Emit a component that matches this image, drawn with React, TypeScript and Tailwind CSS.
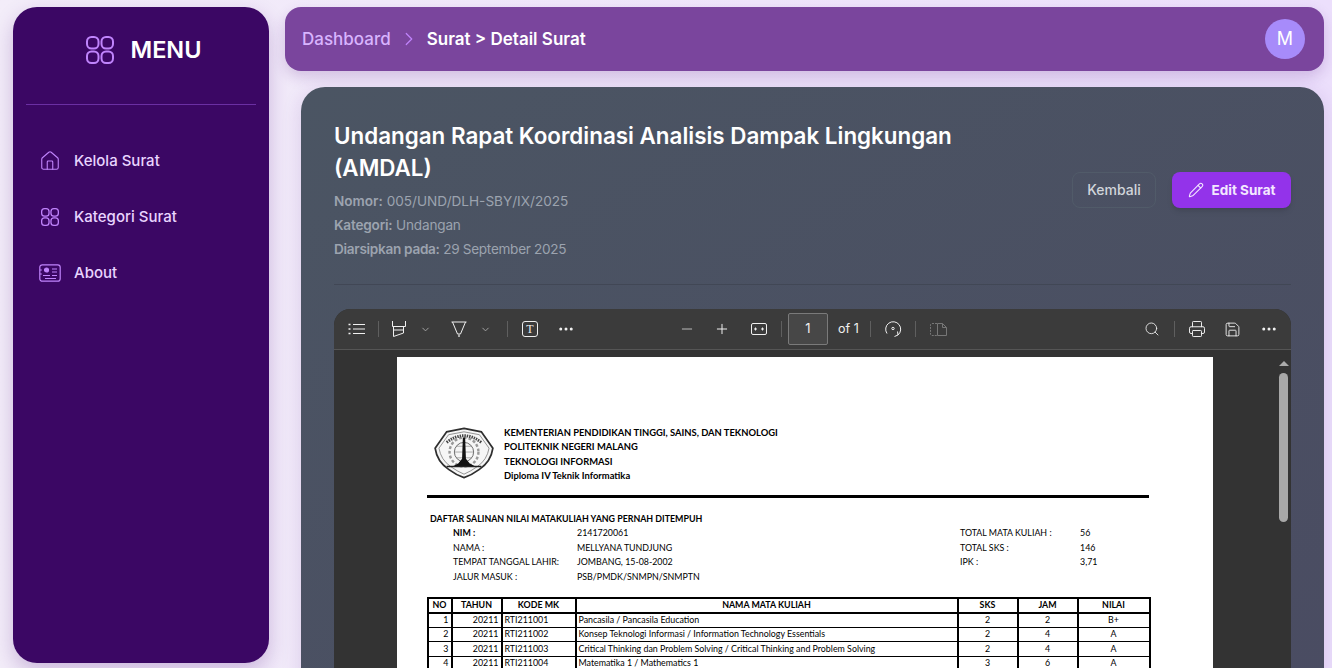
import React from 'react';
import { ChevronDown, ChevronRight, Ellipsis, Home, Minus, Pencil, Plus, Printer, Save, Search } from 'lucide-react';

const GridIcon = ({ className }: { className: string }) => (
  <svg viewBox="0 0 28 28" fill="none" stroke="currentColor" strokeWidth="2" className={className}>
    <rect x="1" y="1" width="11.5" height="11.5" rx="4.5" />
    <rect x="15.5" y="1" width="11.5" height="11.5" rx="4.5" />
    <rect x="1" y="15.5" width="11.5" height="11.5" rx="4.5" />
    <rect x="15.5" y="15.5" width="11.5" height="11.5" rx="4.5" />
  </svg>
);

const IdCardIcon = ({ className }: { className: string }) => (
  <svg viewBox="0 0 22 18" fill="none" stroke="currentColor" strokeWidth="1.2" className={className}>
    <rect x="0.8" y="0.8" width="20.4" height="16.4" rx="2.5" />
    <circle cx="7.5" cy="6" r="2" fill="currentColor" />
    <path d="M4 11.500h7M13 5h5M13 8h5M13 11.500h5M6 14.500h11M.8 6h2M.8 10h2" />
  </svg>
);

const Logo = () => (
  <svg viewBox="0 0 64 54" className="w-[62px] h-[52px] shrink-0">
    <path d="M32 1.500 50 5 62 22Q60 36 48 44 40 50 32 52.500 24 50 16 44 4 36 2 22L14 5Z" fill="#f6f6f6" stroke="#2f2f2f" strokeWidth="1.800" />
    <path d="M32 5 48 8 58 22Q56 34 46 41 39 46 32 49 25 46 18 41 8 34 6 22L16 8Z" fill="none" stroke="#777" strokeWidth="0.800" />
    <circle cx="32" cy="26" r="15" fill="none" stroke="#999" strokeWidth="2.500" strokeDasharray="3 2" />
    <circle cx="32" cy="26" r="10" fill="none" stroke="#666" strokeWidth="1" />
    <path d="M22 26h20M32 16v20M24 20h16M24 32h16" stroke="#888" strokeWidth="0.700" />
    <path d="M30.800 11h2.400l.8 22 4 5 6 3H20l6-3 4-5z" fill="#111" />
    <path d="M14 16Q32 2 50 16" fill="none" stroke="#444" strokeWidth="3" strokeDasharray="1.500 1" />
    <path d="M14 41h36" stroke="#222" strokeWidth="1.500" />
  </svg>
);

const Divider = () => <span className="block w-px h-4 bg-[#5f5f5f] shrink-0" />;

const gradeRows = [
  ['1', '20211', 'RTI211001', 'Pancasila / Pancasila Education', '2', '2', 'B+'],
  ['2', '20211', 'RTI211002', 'Konsep Teknologi Informasi / Information Technology Essentials', '2', '4', 'A'],
  ['3', '20211', 'RTI211003', 'Critical Thinking dan Problem Solving / Critical Thinking and Problem Solving', '2', '4', 'A'],
  ['4', '20211', 'RTI211004', 'Matematika 1 / Mathematics 1', '3', '6', 'A'],
];

const studentInfo = [
  ['NIM :', '2141720061', 'TOTAL MATA KULIAH :', '56'],
  ['NAMA :', 'MELLYANA TUNDJUNG', 'TOTAL SKS :', '146'],
  ['TEMPAT TANGGAL LAHIR:', 'JOMBANG, 15-08-2002', 'IPK :', '3,71'],
  ['JALUR MASUK :', 'PSB/PMDK/SNMPN/SNMPTN', '', ''],
];

const PdfToolbar = () => (
  <div className="h-[41px] shrink-0 flex items-center bg-[#3b3b3b] border-b border-[#555] text-[#f0f0f0] rounded-t-2xl">
    <div className="flex items-center w-[330px] pl-[14px]">
      <svg viewBox="0 0 18 12" fill="none" stroke="currentColor" className="w-[18px] h-3 mr-[12px]">
        <path d="M5 1.500h12M5 6h12M5 10.500h12" />
        <path d="M.5 1.500h2M.5 6h2M.5 10.500h2" strokeWidth="1.600" />
      </svg>
      <Divider />
      <svg viewBox="0 0 16 18" fill="none" stroke="currentColor" className="w-4 h-[18px] ml-[12px]">
        <path d="M1.500 1v5.500h13V1M2.500 6.500v10l10-3.500V6.500M2.500 10h10" />
      </svg>
      <ChevronDown className="w-[11px] h-[11px] ml-[12.500px] text-[#aaa]" />
      <svg viewBox="0 0 16 18" fill="none" stroke="currentColor" className="w-4 h-[18px] ml-[20.500px]">
        <path d="M.5 2h15M1.500 2 6.500 14h3L14.500 2" />
        <path d="M7 14h2v3H7z" fill="#aaa" stroke="none" />
      </svg>
      <ChevronDown className="w-[11px] h-[11px] ml-[12.500px] text-[#aaa]" />
      <span className="block ml-[16.500px]"><Divider /></span>
      <span className="ml-[14px] w-4 h-4 border border-[#eee] rounded-[3px] flex items-center justify-center text-[12px] leading-none font-['Liberation_Serif',serif]">T</span>
      <Ellipsis className="w-[18px] h-[18px] ml-[19px]" />
    </div>
    <div className="flex items-center">
      <Minus className="w-4 h-4 ml-[15px] text-[#bbb]" strokeWidth={1.5} />
      <Plus className="w-4 h-4 ml-[19px]" strokeWidth={1.5} />
      <svg viewBox="0 0 16 12" fill="none" stroke="currentColor" className="w-4 h-3 ml-[21px]">
        <rect x=".5" y=".5" width="15" height="11" rx="1.500" />
        <path d="M6 6H4M10 6h2" />
        <path d="M5 4 3 6l2 2zM11 4l2 2-2 2z" fill="currentColor" stroke="none" />
      </svg>
      <span className="block ml-[14px]"><Divider /></span>
      <span className="ml-[6px] w-10 h-8 border border-[#7a7a7a] rounded-[2px] bg-[#474747] flex items-center justify-center text-[13px] font-['Inter',sans-serif]">1</span>
      <span className="ml-[10px] w-5 text-[12.500px] whitespace-nowrap mt-px font-['Inter',sans-serif]">of 1</span>
      <span className="block ml-[12px]"><Divider /></span>
      <svg viewBox="0 0 18 18" fill="none" stroke="currentColor" className="w-[18px] h-[18px] ml-[13px]">
        <path d="M3 13.500A7.500 7.500 0 1 1 14 15M10.500 16.500l3.500-1.500-.5-3.500" />
        <circle cx="9" cy="8.500" r="1.200" />
      </svg>
      <span className="block ml-[13px]"><Divider /></span>
      <svg viewBox="0 0 17 13" fill="none" stroke="#777" className="w-[17px] h-[13px] ml-[14px]">
        <path d="M7 .5H2A1.500 1.500 0 0 0 .5 2v9A1.500 1.500 0 0 0 2 12.500h5" strokeDasharray="2 1" />
        <path d="M7.500.5h5l4 4v8h-9zM12.500.5v4h4" />
      </svg>
    </div>
    <div className="ml-auto flex items-center pr-[13px]">
      <Search className="w-4 h-4" strokeWidth={1.3} />
      <span className="block ml-[14px]"><Divider /></span>
      <Printer className="w-[18px] h-[18px] ml-[13px]" strokeWidth={1.3} />
      <Save className="w-[17px] h-[17px] ml-[18px]" strokeWidth={1.3} />
      <Ellipsis className="w-[18px] h-[18px] ml-[19px]" />
    </div>
  </div>
);

const PdfPage = () => (
  <div className="w-[816px] h-[600px] shrink-0 bg-white text-black font-['Lato',sans-serif] pt-[70px] pl-[30px] text-[8.850px]">
    <div className="w-[722px] flex items-start pl-[6px] pb-[12px] border-b-[3px] border-black">
      <Logo />
      <div className="ml-[9px] font-bold text-[9.400px] leading-[14.300px] whitespace-nowrap -mt-px">
        <p>KEMENTERIAN PENDIDIKAN TINGGI, SAINS, DAN TEKNOLOGI</p>
        <p>POLITEKNIK NEGERI MALANG</p>
        <p>TEKNOLOGI INFORMASI</p>
        <p>Diploma IV Teknik Informatika</p>
      </div>
    </div>
    <p className="mt-[14px] ml-[3px] font-bold leading-[14.500px]">DAFTAR SALINAN NILAI MATAKULIAH YANG PERNAH DITEMPUH</p>
    <div className="ml-[26px] -mt-[0.500px] mb-[12.500px]">
      {studentInfo.map((row, i) => (
        <div key={row[0]} className="flex h-[14.500px] leading-[14.500px] whitespace-nowrap">
          <span className={i === 0 ? 'w-[124px] font-bold' : 'w-[124px]'}>{row[0]}</span>
          <span className="w-[383px]">{row[1]}</span>
          <span className="w-[120px]">{row[2]}</span>
          <span>{row[3]}</span>
        </div>
      ))}
    </div>
    <table className="w-[722px] -ml-[0.500px] table-fixed border-collapse leading-[12px]">
      <colgroup>
        <col className="w-[24px]" />
        <col className="w-[50px]" />
        <col className="w-[74px]" />
        <col className="w-[382px]" />
        <col className="w-[60px]" />
        <col className="w-[60px]" />
        <col className="w-[72px]" />
      </colgroup>
      <thead>
        <tr className="h-[15px] font-bold text-center">
          {['NO', 'TAHUN', 'KODE MK', 'NAMA MATA KULIAH', 'SKS', 'JAM', 'NILAI'].map((h) => (
            <th key={h} className="border-2 border-black p-0 font-bold">{h}</th>
          ))}
        </tr>
      </thead>
      <tbody>
        {gradeRows.map((r) => (
          <tr key={r[0]} className="h-[14.500px]">
            <td className="border-x-2 border-b border-black p-0 pr-[2px] text-right">{r[0]}</td>
            <td className="border-x-2 border-b border-black p-0 pr-[2px] text-right">{r[1]}</td>
            <td className="border-x-2 border-b border-black p-0 pl-[2px]">{r[2]}</td>
            <td className="border-x-2 border-b border-black p-0 pl-[2px] whitespace-nowrap">{r[3]}</td>
            <td className="border-x-2 border-b border-black p-0 text-center">{r[4]}</td>
            <td className="border-x-2 border-b border-black p-0 text-center">{r[5]}</td>
            <td className="border-x-2 border-b border-black p-0 text-center">{r[6]}</td>
          </tr>
        ))}
      </tbody>
    </table>
  </div>
);

export default function App() {
  return (
    <div className="h-[668px] overflow-hidden flex items-start gap-4 pl-[13px] pr-2 pt-[7px] bg-gradient-to-r from-[#f3edf9] to-[#ecdffc] font-['Inter',sans-serif]">
      <aside className="w-[256px] h-[656px] shrink-0 rounded-3xl bg-[#3b0764] shadow-[0_8px_20px_rgba(88,28,135,0.25)] flex flex-col">
        <div className="h-[98px] mx-[13px] border-b border-[#6b2fa3] flex items-start justify-center pt-[29px] pl-[6px] gap-[16px]">
          <GridIcon className="w-7 h-7 text-[#c084fc]" />
          <span className="text-white text-[23.500px] font-semibold leading-7">MENU</span>
        </div>
        <nav className="mt-[28px] pl-[26px] flex flex-col text-[#e9d5ff] text-[15px] font-medium">
          <a className="h-14 flex items-center gap-[13px]">
            <Home className="w-[22px] h-[22px] text-[#c084fc]" strokeWidth={1.2} />
            Kelola Surat
          </a>
          <a className="h-14 flex items-center gap-[13px]">
            <span className="w-[22px] flex justify-center"><GridIcon className="w-[18px] h-[18px] text-[#c084fc]" /></span>
            Kategori Surat
          </a>
          <a className="h-14 flex items-center gap-[13px]">
            <IdCardIcon className="w-[22px] h-[18px] text-[#c084fc]" />
            About
          </a>
        </nav>
      </aside>

      <div className="flex-1 min-w-0 flex flex-col gap-4">
        <header className="h-16 shrink-0 rounded-2xl bg-[#7a459d] shadow-[0_6px_14px_rgba(88,28,135,0.2)] flex items-center pl-[17px] pr-[19px]">
          <span className="text-[#d8b4fe] text-[17px] font-medium pt-[2px]">Dashboard</span>
          <ChevronRight className="w-[22px] h-[22px] mx-[7px] text-[#c084fc]" strokeWidth={1.3} />
          <span className="text-white text-[17px] font-semibold pt-[2px]">Surat &gt; Detail Surat</span>
          <span className="ml-auto w-10 h-10 rounded-full bg-[#a78bfa] text-white flex items-center justify-center text-lg">M</span>
        </header>

        <main className="ml-4 h-[600px] rounded-t-3xl bg-gradient-to-br from-[#4b5563] to-[#4a4c62] shadow-[0_4px_20px_rgba(88,28,135,0.15)] pt-[33px] px-[33px] flex flex-col">
          <div className="flex items-center justify-between h-[165px] shrink-0 border-b border-[#414755]">
            <div className="w-[640px] self-start">
              <h1 className="text-white text-[22.400px] leading-8 font-semibold">Undangan Rapat Koordinasi Analisis Dampak Lingkungan (AMDAL)</h1>
              <div className="mt-[5px] text-[#9ca3af] text-[13.600px] leading-6">
                <p><b className="font-semibold">Nomor:</b> 005/UND/DLH-SBY/IX/2025</p>
                <p className="tracking-[-0.2px]"><b className="font-semibold">Kategori:</b> Undangan</p>
                <p className="tracking-[-0.3px]"><b className="font-semibold">Diarsipkan pada:</b> 29 September 2025</p>
              </div>
            </div>
            <div className="flex items-center gap-4 -mt-[24px]">
              <button className="h-9 w-[84px] rounded-lg border border-[#515b69] text-[#d1d5db] text-sm font-medium">Kembali</button>
              <button className="h-9 w-[119px] rounded-lg bg-[#9333ea] text-[#f3e8ff] text-[13.500px] font-bold flex items-center justify-center gap-2 shadow-md">
                <Pencil className="w-4 h-4" strokeWidth={1.6} />
                Edit Surat
              </button>
            </div>
          </div>

          <div className="mt-6 flex-1 min-h-0 rounded-t-2xl bg-[#333] overflow-hidden flex flex-col relative">
            <PdfToolbar />
            <div className="pl-[63px] pt-[7px]">
              <PdfPage />
            </div>
            <div className="absolute right-[3px] top-[52px] w-[9px] flex flex-col items-center gap-[7px]">
              <span className="w-0 h-0 border-x-[5px] border-x-transparent border-b-[5px] border-b-[#aaa]" />
              <span className="w-[9px] h-[149px] rounded-full bg-[#a8a8a8]" />
            </div>
          </div>
        </main>
      </div>
    </div>
  );
}
